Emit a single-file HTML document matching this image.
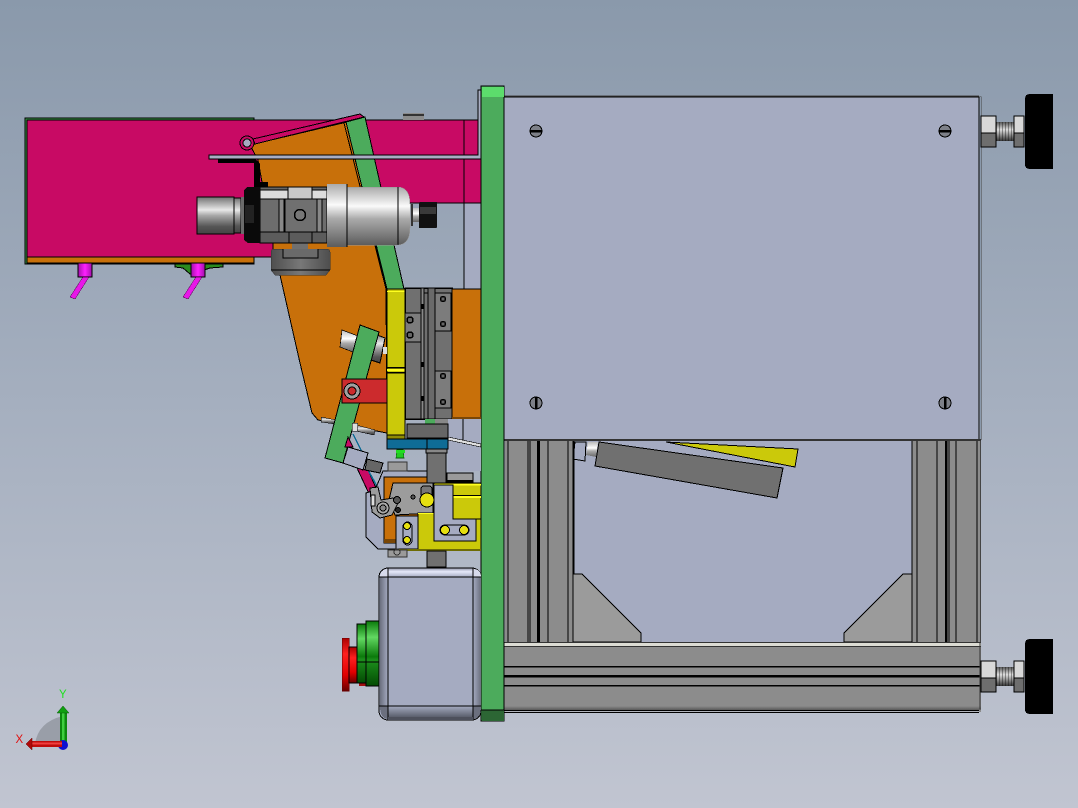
<!DOCTYPE html>
<html><head><meta charset="utf-8"><title>CAD Assembly</title>
<style>html,body{margin:0;padding:0;width:1078px;height:808px;overflow:hidden;background:#a8b2c0}svg{display:block}text{font-family:"Liberation Sans",sans-serif}</style></head>
<body>
<svg width="1078" height="808" viewBox="0 0 1078 808" xmlns="http://www.w3.org/2000/svg" shape-rendering="crispEdges">
<defs>
<linearGradient id="bg" x1="0" y1="0" x2="0" y2="1"><stop offset="0" stop-color="#8a99ab"/><stop offset=".5" stop-color="#a5afbf"/><stop offset="1" stop-color="#c1c5d1"/></linearGradient>
<linearGradient id="metal" x1="0" y1="0" x2="0" y2="1"><stop offset="0" stop-color="#707070"/><stop offset=".12" stop-color="#9a9a9a"/><stop offset=".35" stop-color="#e8e8e8"/><stop offset=".5" stop-color="#a8a8a8"/><stop offset=".8" stop-color="#555"/><stop offset="1" stop-color="#444"/></linearGradient>
<linearGradient id="metal2" x1="0" y1="0" x2="0" y2="1"><stop offset="0" stop-color="#aaa"/><stop offset=".33" stop-color="#fafafa"/><stop offset=".55" stop-color="#aaa"/><stop offset=".85" stop-color="#777"/><stop offset="1" stop-color="#5c5c5c"/></linearGradient>
<linearGradient id="metal3" x1="0" y1="0" x2="0" y2="1"><stop offset="0" stop-color="#bbb"/><stop offset=".4" stop-color="#fff"/><stop offset=".6" stop-color="#aaa"/><stop offset="1" stop-color="#666"/></linearGradient>
<linearGradient id="foot" x1="0" y1="0" x2="1" y2="0"><stop offset="0" stop-color="#4e4e4e"/><stop offset=".5" stop-color="#787878"/><stop offset="1" stop-color="#4e4e4e"/></linearGradient>
<linearGradient id="thread" x1="0" y1="0" x2="0" y2="1"><stop offset="0" stop-color="#555"/><stop offset=".4" stop-color="#ddd"/><stop offset="1" stop-color="#333"/></linearGradient>
<pattern id="thr" width="3" height="30" patternUnits="userSpaceOnUse"><rect width="3" height="30" fill="none"/><rect width="1" height="30" fill="#000" opacity=".35"/></pattern>
<linearGradient id="gr" x1="0" y1="0" x2="0" y2="1"><stop offset="0" stop-color="#0a7a0a"/><stop offset=".25" stop-color="#62d862"/><stop offset=".55" stop-color="#0b7a0b"/><stop offset=".6" stop-color="#1d8f1d"/><stop offset="1" stop-color="#034a03"/></linearGradient>
<linearGradient id="rd" x1="0" y1="0" x2="0" y2="1"><stop offset="0" stop-color="#a00"/><stop offset=".3" stop-color="#ff2020"/><stop offset=".7" stop-color="#e00000"/><stop offset="1" stop-color="#600"/></linearGradient>
<linearGradient id="mag" x1="0" y1="0" x2="1" y2="0"><stop offset="0" stop-color="#a010a8"/><stop offset=".5" stop-color="#ff20ff"/><stop offset="1" stop-color="#a010a8"/></linearGradient>
<linearGradient id="boxt" x1="0" y1="0" x2="0" y2="1"><stop offset="0" stop-color="#8e93a8"/><stop offset=".4" stop-color="#e6e9fa"/><stop offset="1" stop-color="#a5abc1"/></linearGradient>
<linearGradient id="boxb" x1="0" y1="0" x2="0" y2="1"><stop offset="0" stop-color="#a5abc1"/><stop offset="1" stop-color="#5a5e6c"/></linearGradient>
<linearGradient id="boxl" x1="0" y1="0" x2="1" y2="0"><stop offset="0" stop-color="#6b6f7e"/><stop offset="1" stop-color="#a5abc1"/></linearGradient>
<linearGradient id="boxr" x1="0" y1="0" x2="1" y2="0"><stop offset="0" stop-color="#a5abc1"/><stop offset="1" stop-color="#6b6f7e"/></linearGradient>
<linearGradient id="bev" x1="0" y1="0" x2="0" y2="1"><stop offset="0" stop-color="#8c8c8c"/><stop offset="1" stop-color="#5a5a5a"/></linearGradient>
</defs>
<rect width="1078" height="808" fill="url(#bg)"/>

<!-- magenta body -->
<rect x="25" y="118" width="229" height="146" fill="#3a9a48" stroke="#000" stroke-width="1"/>
<polygon points="27,120 481,120 481,203 400,203 330,250 273,257 27,257" fill="#c80a64" stroke="#000"/>
<rect x="27" y="257" width="227" height="6" fill="#c8700a" stroke="#000"/>
<rect x="464" y="203" width="17" height="86" fill="#a5abc1"/>
<line x1="464" y1="120" x2="464" y2="290" stroke="#000"/>
<line x1="400" y1="203" x2="481" y2="203" stroke="#000"/>

<!-- green underside -->
<polygon points="175,264 223,264 223,267 210,268 198,272 190,274 183,268 175,267" fill="#2b8a1f" stroke="#000"/>

<!-- nub on top -->
<rect x="403" y="113" width="21" height="7" fill="#8c8c8c"/>
<rect x="403" y="114" width="21" height="2" fill="#333"/>

<!-- orange polygon -->
<polygon points="250,145 347,122 386,288 387,433 318,420 312,413 300,363 280,275 273,257 273,243 258,160" fill="#c8700a" stroke="#000"/>
<polygon points="346,122 365,117 404,289 387,289" fill="#4cab5c" stroke="#000"/>
<line x1="344" y1="123" x2="386" y2="289" stroke="#000"/>

<!-- thin arm -->
<polygon points="253,139 360,114 364,117 255,144" fill="#c80a64" stroke="#000"/>
<circle cx="247" cy="143" r="7" fill="#c80a64" stroke="#000"/>
<circle cx="247" cy="143" r="4" fill="#a5abc1" stroke="#000"/>

<!-- flat bar -->
<path d="M209,155 H478 V90 H481 V159 H209 Z" fill="#a9aec3" stroke="#000"/>

<!-- black bracket -->
<path d="M218,159 H255 L260,164 V190 H254 V163 H218 Z" fill="#000"/>

<!-- main plate -->
<rect x="504" y="97" width="475" height="343" fill="#a5abc1" stroke="#000"/>
<line x1="504" y1="96" x2="979" y2="96" stroke="#444"/>
<path d="M979,97 H981 V440" fill="none" stroke="#444"/>
<rect x="980" y="97" width="1" height="343" fill="#8a99ab"/>

<!-- screws -->
<g stroke="#000" fill="#7d8088">
<circle cx="536" cy="131" r="6"/><circle cx="945" cy="131" r="6"/><circle cx="536" cy="403" r="6"/><circle cx="945" cy="403" r="6"/>
</g>
<rect x="530" y="130" width="12" height="2.5" fill="#000"/>
<rect x="939" y="130" width="12" height="2.5" fill="#000"/>
<rect x="535" y="397" width="2.5" height="12" fill="#000"/>
<rect x="944" y="397" width="2.5" height="12" fill="#000"/>

<!-- frame center -->
<rect x="573" y="440" width="340" height="203" fill="#a5abc1"/>
<rect x="504" y="439" width="477" height="2" fill="#333"/>

<!-- tilted parts -->
<polygon points="666,442 798,449 795,467" fill="#cbc90a" stroke="#000"/>
<polygon points="599,442 783,468 777,498 595,466" fill="#707070" stroke="#000"/>
<polygon points="575,442 586,442 585,461 573,459" fill="#a5abc1" stroke="#000"/>
<polygon points="588,442 598,442 596,457 586,455" fill="url(#metal3)"/>

<!-- verticals left -->
<rect x="505" y="441" width="68" height="202" fill="#8c8c8c"/>
<g stroke="#000">
<line x1="508" y1="441" x2="508" y2="642"/><line x1="528" y1="441" x2="528" y2="642"/><line x1="530" y1="441" x2="530" y2="642"/>
<line x1="548" y1="441" x2="548" y2="642"/><line x1="568" y1="441" x2="568" y2="642"/><line x1="573" y1="441" x2="573" y2="642"/><line x1="574" y1="441" x2="574" y2="574"/>
</g>
<rect x="537" y="441" width="3" height="202" fill="#000"/>

<!-- verticals right -->
<rect x="912" y="441" width="69" height="202" fill="#8c8c8c"/>
<g stroke="#000">
<line x1="912" y1="441" x2="912" y2="642"/><line x1="917" y1="441" x2="917" y2="642"/><line x1="937" y1="441" x2="937" y2="642"/>
<line x1="949" y1="441" x2="949" y2="642"/><line x1="956" y1="441" x2="956" y2="642"/><line x1="977" y1="441" x2="977" y2="642"/>
</g>
<rect x="945" y="441" width="2.5" height="202" fill="#000"/>
<rect x="980" y="441" width="1" height="202" fill="#444"/>

<!-- gussets -->
<polygon points="573,574 582,574 641,633 641,642 573,642" fill="#9b9b9b" stroke="#000"/>
<polygon points="912,574 903,574 844,633 844,642 912,642" fill="#9b9b9b" stroke="#000"/>

<!-- beam -->
<rect x="504" y="643" width="477" height="69" fill="#8c8c8c"/>
<rect x="504" y="642" width="477" height="1" fill="#333"/>
<rect x="504" y="643" width="477" height="3" fill="#dcdcd4"/>
<rect x="504" y="646" width="477" height="1" fill="#333"/>
<rect x="504" y="666" width="477" height="1.5" fill="#000"/>
<rect x="504" y="675" width="477" height="2.5" fill="#000"/>
<rect x="504" y="685" width="477" height="1.5" fill="#000"/>
<rect x="504" y="706" width="477" height="4" fill="url(#bev)"/>
<rect x="504" y="710" width="475" height="1" fill="#000"/>
<rect x="504" y="711" width="475" height="1" fill="#b0b3bb"/>
<rect x="504" y="712" width="475" height="1" fill="#000"/>
<line x1="980" y1="643" x2="980" y2="709" stroke="#333"/>

<!-- green plate -->
<rect x="481" y="86" width="23" height="635" fill="#4cab5c" stroke="#000"/>
<rect x="482" y="87" width="22" height="10" fill="#5cdc6c"/>
<rect x="482" y="710" width="22" height="11" fill="#2c6634"/>
<line x1="481" y1="710" x2="504" y2="710" stroke="#000"/>

<!-- pins -->
<rect x="78" y="263" width="14" height="14" fill="url(#mag)" stroke="#000"/>
<polygon points="83,277 89,277 75,299 70,297" fill="#e818e8" stroke="#5a0a5a" stroke-width=".5"/>
<rect x="191" y="263" width="14" height="14" fill="url(#mag)" stroke="#000"/>
<polygon points="196,277 202,277 188,299 183,297" fill="#e818e8" stroke="#5a0a5a" stroke-width=".5"/>

<!-- foot -->
<rect x="292" y="243" width="16" height="7" fill="#707070"/>
<path d="M271,252 Q271,249 275,249 H326 Q330,249 330,252 V270 L326,275 H275 L271,270 Z" fill="url(#foot)" stroke="#333" stroke-width=".5"/>
<path d="M283,249 V258 H318 V249" fill="#6a6a6a" stroke="#000"/>
<line x1="271" y1="270" x2="330" y2="270" stroke="#000"/>

<!-- spindle -->
<rect x="197" y="197" width="37" height="37" fill="url(#metal)" stroke="#000" stroke-width=".8"/>
<rect x="234" y="198" width="7" height="35" fill="url(#metal)" stroke="#000" stroke-width=".8"/>
<rect x="241" y="197" width="3" height="37" fill="#6b6b6b"/>
<rect x="260" y="187" width="67" height="56" fill="#666" stroke="#000"/>
<rect x="260" y="190" width="67" height="9" fill="#dcdcdc" stroke="#000"/>
<rect x="288" y="187" width="24" height="12" fill="#c8c8c8" stroke="#000"/>
<rect x="260" y="199" width="67" height="33" fill="#6d6d6d" stroke="#000"/>
<rect x="279" y="199" width="5" height="33" fill="#888" stroke="#000"/>
<rect x="285" y="199" width="32" height="33" fill="#707070" stroke="#000"/>
<rect x="317" y="199" width="5" height="33" fill="#888" stroke="#000"/>
<rect x="289" y="232" width="23" height="11" fill="#5c5c5c" stroke="#000"/>
<rect x="260" y="232" width="29" height="11" fill="#5c5c5c" stroke="#000"/>
<rect x="312" y="232" width="15" height="11" fill="#5c5c5c" stroke="#000"/>
<circle cx="300" cy="215" r="5.5" fill="#777" stroke="#000" stroke-width="1.5"/>
<path d="M247,187 H260 V243 H248 L244,240 V190 Z" fill="#0a0a0a"/>
<rect x="260" y="182" width="8" height="5" fill="#000"/>
<rect x="245" y="205" width="9" height="18" fill="#222"/>
<path d="M347,187 H397 Q410,187 410,204 V228 Q410,245 397,245 H347 Z" fill="url(#metal2)" stroke="#999" stroke-width=".5"/>
<line x1="398" y1="187" x2="398" y2="245" stroke="#000"/>
<rect x="327" y="184" width="20" height="63" fill="url(#metal2)"/>
<line x1="347" y1="184" x2="347" y2="247" stroke="#000"/>
<rect x="411" y="204" width="2" height="22" fill="#333"/>
<rect x="413" y="208" width="7" height="14" fill="url(#metal3)"/>
<rect x="419" y="202" width="18" height="26" rx="1" fill="#111"/>
<rect x="420" y="207" width="16" height="7" fill="#3a3a3a"/>

<!-- yellow rail -->
<rect x="387" y="289" width="18" height="146" fill="#cbc90a" stroke="#000"/>
<rect x="387" y="291" width="18" height="1" fill="#ffff20"/>
<rect x="387" y="367" width="18" height="1.5" fill="#000"/>
<rect x="387" y="369" width="18" height="2" fill="#ffff20"/>
<rect x="387" y="372" width="18" height="1.5" fill="#000"/>
<rect x="387" y="435" width="18" height="4" fill="#8e8c05" stroke="#000"/>

<!-- slide -->
<rect x="405" y="288" width="47" height="131" fill="#707070" stroke="#000" stroke-width="1.5"/>
<rect x="405" y="313" width="16" height="29" fill="#7c7c7c" stroke="#000"/>
<rect x="421" y="288" width="3" height="131" fill="#888" stroke="#000"/>
<rect x="424" y="293" width="4" height="126" fill="#6f6f6f" stroke="#000"/>
<rect x="428" y="288" width="7" height="131" fill="#6a6a6a" stroke="#000"/>
<rect x="435" y="293" width="16" height="38" fill="#7c7c7c" stroke="#000"/>
<rect x="435" y="371" width="16" height="37" fill="#7c7c7c" stroke="#000"/>
<g fill="#666" stroke="#000" stroke-width="1.5">
<circle cx="410" cy="320" r="3"/><circle cx="410" cy="335" r="3"/><circle cx="443" cy="299" r="2.5"/><circle cx="443" cy="324" r="2.5"/><circle cx="443" cy="376" r="2.5"/><circle cx="443" cy="402" r="2.5"/>
</g>
<rect x="421" y="304" width="3" height="5" fill="#000"/><rect x="421" y="362" width="3" height="5" fill="#000"/><rect x="421" y="396" width="3" height="5" fill="#000"/>

<!-- orange right of slide -->
<rect x="452" y="289" width="29" height="130" fill="#c8700a" stroke="#000"/>
<rect x="452" y="417" width="29" height="2" fill="#7a4606"/>

<!-- area below slide -->
<rect x="448" y="419" width="33" height="52" fill="#a5abc1"/>
<line x1="463" y1="419" x2="463" y2="440" stroke="#000"/>
<polygon points="448,437 481,444 481,447 448,440" fill="#e0e0e0" stroke="#000" stroke-width=".6"/>
<rect x="425" y="419" width="10" height="5" fill="#4cab5c"/>
<rect x="435" y="419" width="13" height="5" fill="#888"/>
<rect x="407" y="424" width="41" height="14" fill="#666" stroke="#000"/>
<rect x="387" y="439" width="40" height="10" fill="#0f6c96" stroke="#000"/>
<rect x="427" y="439" width="21" height="10" fill="#0f6c96" stroke="#000"/>

<!-- bolts behind the small plate -->
<polygon points="342,330 358,336 353,352 340,347" fill="url(#metal3)" stroke="#000" stroke-width=".7"/>
<polygon points="372,333 385,338 380,363 371,360" fill="url(#metal)" stroke="#000"/>
<rect x="383" y="347" width="4" height="7" fill="#ddd"/>
<polygon points="321,417 336,420 335,424 321,422" fill="url(#metal)" stroke="#000" stroke-width=".5"/>
<polygon points="356,425 375,430 374,435 356,431" fill="url(#metal)" stroke="#000" stroke-width=".5"/>

<!-- small green tilted plate -->
<polygon points="360,325 379,332 343,463 325,458" fill="#4cab5c" stroke="#000"/>
<polygon points="352,423 358,423 357,431 352,431" fill="#ddd" stroke="#000" stroke-width=".5"/>

<!-- red block and washer -->
<rect x="342" y="379" width="45" height="24" fill="#cc2b2d" stroke="#000"/>
<circle cx="352" cy="391" r="8" fill="#a0a0a0" stroke="#000"/>
<circle cx="352" cy="391" r="4" fill="#cc2b2d" stroke="#000"/>

<!-- magenta links -->
<polygon points="348,437 353,447 345,447" fill="#c80a64" stroke="#000"/>
<polygon points="357,468 368,470 376,488 371,498" fill="#c80a64" stroke="#000"/>
<line x1="353" y1="434" x2="364" y2="456" stroke="#0f6c96" stroke-width="1.5"/>
<line x1="368" y1="470" x2="378" y2="488" stroke="#0f6c96" stroke-width="1.5"/>

<!-- light tilted block -->
<polygon points="348,447 368,453 363,470 343,463" fill="#a5abc1" stroke="#000"/>
<polygon points="367,459 383,463 380,473 365,470" fill="#666" stroke="#000"/>

<!-- lower bracket -->
<polygon points="383,471 428,471 428,549 378,549 366,537 366,493 375,490" fill="#a5abc1" stroke="#000"/>
<rect x="384" y="477" width="44" height="66" fill="#c8700a" stroke="#000"/>
<rect x="384" y="539" width="12" height="4" fill="#7a4606"/>
<rect x="388" y="462" width="19" height="9" fill="#9a9a9a" stroke="#333" stroke-width=".6"/>
<polygon points="396,458 404,458 403,450 397,450" fill="#22cc22" stroke="#0a600a" stroke-width=".6"/>
<rect x="396" y="450" width="9" height="3" fill="#22dd22"/>

<!-- stem -->
<rect x="427" y="449" width="19" height="35" fill="#707070" stroke="#000"/>
<rect x="426" y="449" width="21" height="4" fill="#888" stroke="#000"/>
<rect x="447" y="473" width="26" height="10" fill="#9a9a9a" stroke="#000" stroke-width=".6"/>
<rect x="447" y="480" width="26" height="3" fill="#000"/>

<!-- grey mechanism -->
<polygon points="393,483 433,483 433,513 395,515 389,500" fill="#9c9c9c" stroke="#000"/>
<polygon points="370,488 378,487 381,500 393,498 398,503 392,515 380,518 372,512" fill="#9c9c9c" stroke="#000"/>
<rect x="371" y="495" width="4" height="11" fill="#ddd" stroke="#000"/>
<circle cx="383" cy="508" r="6" fill="#aaa" stroke="#000"/>
<circle cx="383" cy="508" r="3" fill="#888" stroke="#000"/>
<circle cx="397" cy="500" r="3.5" fill="#555" stroke="#000"/>
<circle cx="398" cy="510" r="2.5" fill="#222" stroke="#000"/>
<circle cx="413" cy="497" r="2" fill="#555" stroke="#000"/>
<rect x="421" y="486" width="11" height="11" rx="3" fill="#777" stroke="#000"/>
<circle cx="427" cy="500" r="7" fill="#e6e010" stroke="#000"/>

<!-- yellow block -->
<rect x="418" y="513" width="63" height="37" fill="#cbc90a" stroke="#000"/>
<rect x="434" y="483" width="47" height="36" fill="#cbc90a" stroke="#000"/>
<rect x="434" y="484" width="47" height="1.5" fill="#ffff20"/>
<rect x="453" y="495" width="28" height="1" fill="#000"/>
<rect x="453" y="496" width="28" height="2" fill="#ffff20"/>
<rect x="418" y="513" width="16" height="1" fill="#ffff20"/>
<path d="M434,485 H453 V519 H476 V541 H434 Z" fill="#a5abc1" stroke="#000"/>
<rect x="440" y="525" width="29" height="10" rx="5" fill="#a5abc1" stroke="#000"/>
<circle cx="445" cy="530" r="4.5" fill="#e6e010" stroke="#000"/>
<circle cx="464" cy="530" r="4.5" fill="#e6e010" stroke="#000"/>
<rect x="396" y="516" width="22" height="33" fill="#a5abc1" stroke="#000"/>
<rect x="403" y="522" width="9" height="23" rx="4.5" fill="#a5abc1" stroke="#000"/>
<circle cx="407" cy="526" r="3.5" fill="#e6e010" stroke="#000"/>
<circle cx="407" cy="540" r="3.5" fill="#e6e010" stroke="#000"/>
<rect x="396" y="549" width="85" height="2" fill="#6e6c05"/>

<!-- lower small parts -->
<rect x="388" y="550" width="19" height="7" fill="#9a9a9a" stroke="#333" stroke-width=".6"/>
<circle cx="397" cy="552" r="3" fill="none" stroke="#333"/>
<rect x="427" y="551" width="19" height="16" fill="#707070" stroke="#000"/>

<!-- buttons -->
<rect x="342" y="638" width="7" height="53" fill="url(#rd)" stroke="#600" stroke-width=".5"/>
<rect x="349" y="647" width="8" height="36" fill="url(#rd)" stroke="#000" stroke-width=".6"/>
<rect x="359" y="683" width="7" height="3" fill="#a01010"/>
<rect x="357" y="624" width="9" height="59" fill="url(#gr)" stroke="#000" stroke-width=".8"/>
<rect x="366" y="621" width="13" height="65" fill="url(#gr)" stroke="#000" stroke-width=".8"/>
<line x1="357" y1="662" x2="379" y2="662" stroke="#000"/>

<!-- motor box -->
<rect x="379" y="568" width="102" height="152" rx="9" fill="#a5abc1" stroke="#000"/>
<path d="M388,568 H473 V577 H388 Z" fill="url(#boxt)"/>
<path d="M388,706 H473 V717 H388 Z" fill="url(#boxb)"/>
<path d="M380,577 H388 V706 H380 Z" fill="url(#boxl)"/>
<path d="M473,577 H481 V706 H473 Z" fill="url(#boxr)"/>
<path d="M380,577 Q380,569 388,569 V577 Z" fill="#d7daeb"/>
<path d="M481,577 Q481,569 473,569 V577 Z" fill="#d7daeb"/>
<path d="M380,706 Q380,719 388,719 V706 Z" fill="#6b6f7e"/>
<path d="M481,706 Q481,719 473,719 V706 Z" fill="#6b6f7e"/>
<g stroke="#000"><line x1="388" y1="568" x2="388" y2="720"/><line x1="473" y1="568" x2="473" y2="720"/><line x1="379" y1="577" x2="481" y2="577"/><line x1="379" y1="706" x2="481" y2="706"/><line x1="388" y1="568" x2="473" y2="568"/></g>
<rect x="388" y="717" width="85" height="3" fill="#4d505c"/>

<!-- right top adjuster -->
<rect x="996" y="122" width="18" height="19" fill="url(#thread)"/><rect x="996" y="122" width="18" height="19" fill="url(#thr)"/>
<rect x="981" y="116" width="15" height="31" fill="#d8d8d8" stroke="#000"/>
<rect x="981" y="133" width="15" height="14" fill="#6e6e6e" stroke="#000"/>
<rect x="1014" y="116" width="10" height="31" fill="#d8d8d8" stroke="#000"/>
<rect x="1014" y="133" width="10" height="14" fill="#6e6e6e" stroke="#000"/>
<path d="M1025,99 Q1025,94 1030,94 H1053 V169 H1030 Q1025,169 1025,164 Z" fill="#000"/>

<!-- right bottom adjuster -->
<rect x="996" y="667" width="18" height="19" fill="url(#thread)"/><rect x="996" y="667" width="18" height="19" fill="url(#thr)"/>
<rect x="981" y="661" width="15" height="31" fill="#d8d8d8" stroke="#000"/>
<rect x="981" y="678" width="15" height="14" fill="#6e6e6e" stroke="#000"/>
<rect x="1014" y="661" width="10" height="31" fill="#d8d8d8" stroke="#000"/>
<rect x="1014" y="678" width="10" height="14" fill="#6e6e6e" stroke="#000"/>
<path d="M1025,644 Q1025,639 1030,639 H1053 V714 H1030 Q1025,714 1025,709 Z" fill="#000"/>

<!-- triad -->
<g shape-rendering="auto">
<path d="M63,744 H35 Q38,722 63,716 Z" fill="#999ea8"/>
<rect x="60" y="713" width="7" height="32" fill="#0d8a0d"/>
<rect x="62" y="713" width="2.5" height="32" fill="#3fcf3f"/>
<polygon points="57,713 69,713 63,706" fill="#10a010" stroke="#0a5a0a" stroke-width=".5"/>
<circle cx="63" cy="745" r="5" fill="#1010d0"/>
<rect x="32" y="741" width="30" height="6" fill="#c00c0c"/>
<rect x="32" y="742.5" width="30" height="2" fill="#f04040"/>
<polygon points="32,738 32,750 26,744" fill="#b00808" stroke="#600" stroke-width=".5"/>
<text x="15.5" y="743" font-size="11.5" fill="#e01010">X</text>
<text x="59" y="698" font-size="11.5" fill="#20e020">Y</text>
</g>
</svg>
</body></html>
